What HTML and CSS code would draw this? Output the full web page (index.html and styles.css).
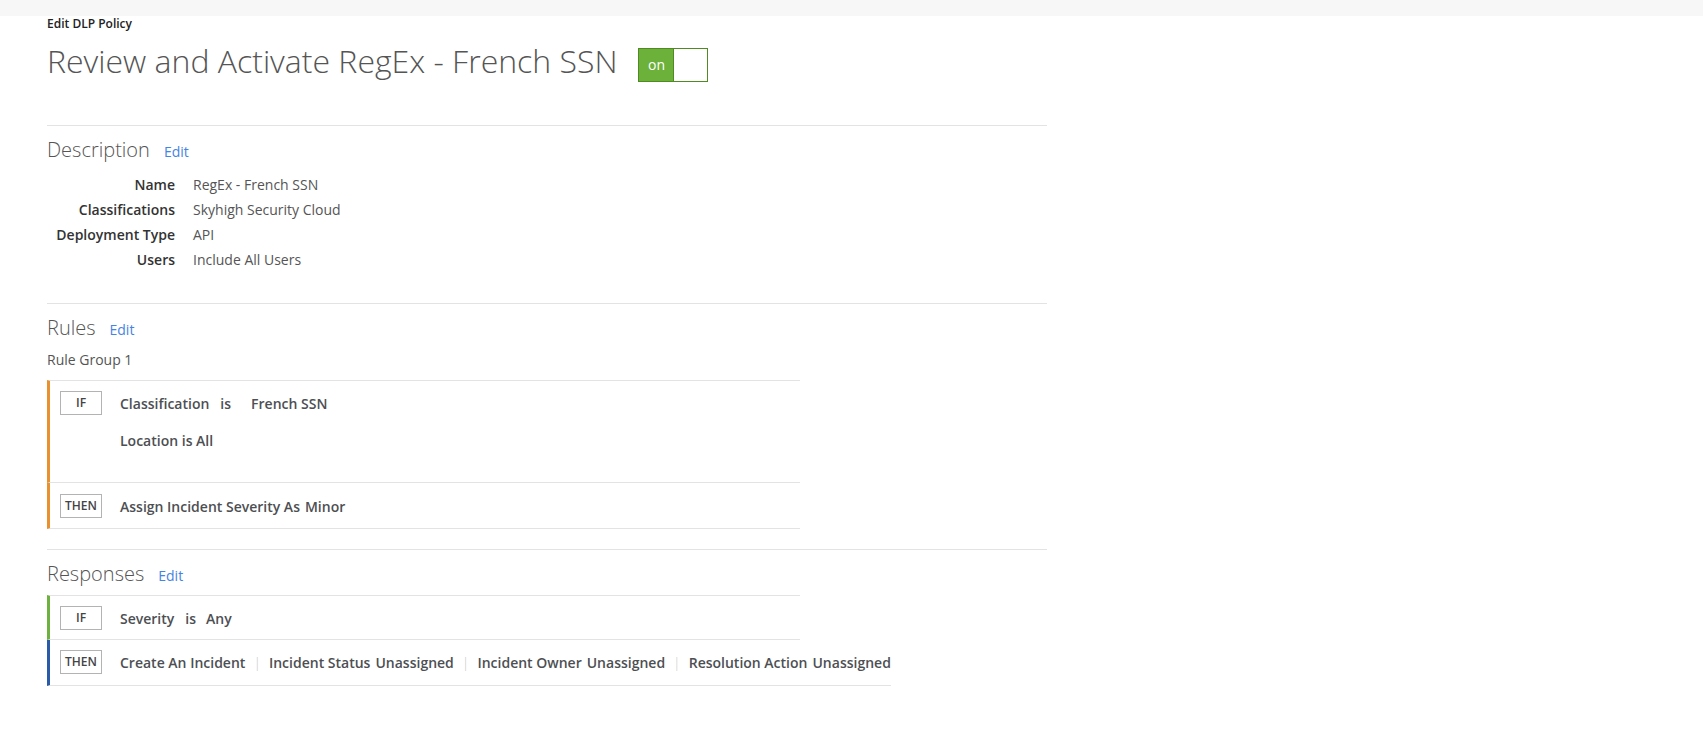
FILE: index.html
```html
<!DOCTYPE html>
<html>
<head>
<meta charset="utf-8">
<link rel="stylesheet" href="styles.css">
</head>
<body>
<div class="topbar"></div>
<main class="page">
  <div class="crumb">Edit DLP Policy</div>
  <div class="title-row">
    <h1 class="title">Review and Activate RegEx - French SSN</h1>
    <div class="toggle"><span class="toggle-on">on</span><span class="toggle-knob"></span></div>
  </div>

  <section class="section section-desc">
    <div class="sec-head"><h2 class="sec-title">Description</h2><a class="edit">Edit</a></div>
    <div class="props">
      <div class="prop-label">Name</div><div class="prop-value">RegEx - French SSN</div>
      <div class="prop-label">Classifications</div><div class="prop-value">Skyhigh Security Cloud</div>
      <div class="prop-label">Deployment Type</div><div class="prop-value">API</div>
      <div class="prop-label">Users</div><div class="prop-value">Include All Users</div>
    </div>
  </section>

  <section class="section section-rules">
    <div class="sec-head"><h2 class="sec-title">Rules</h2><a class="edit">Edit</a></div>
    <div class="group-name">Rule Group 1</div>
    <div class="rule-box">
      <div class="rule-row row-orange row-first row-if">
        <span class="badge">IF</span>
        <div class="conds">
          <div class="cond"><span class="gap11">Classification</span><span class="gap20">is</span><span>French SSN</span></div>
          <div class="cond">Location is All</div>
        </div>
      </div>
      <div class="rule-row row-orange row-then">
        <span class="badge">THEN</span>
        <div class="cond"><span class="gap5">Assign Incident Severity As</span><span>Minor</span></div>
      </div>
    </div>
  </section>

  <section class="section section-resp">
    <div class="sec-head"><h2 class="sec-title">Responses</h2><a class="edit">Edit</a></div>
    <div class="rule-box">
      <div class="rule-row row-green row-first resp-if">
        <span class="badge">IF</span>
        <div class="cond"><span class="gap11">Severity</span><span class="gap10">is</span><span>Any</span></div>
      </div>
      <div class="rule-row row-blue resp-then">
        <span class="badge">THEN</span>
        <div class="cond"><span>Create An Incident</span><span class="sep">|</span><span class="gap5">Incident Status</span><span>Unassigned</span><span class="sep">|</span><span class="gap5">Incident Owner</span><span>Unassigned</span><span class="sep">|</span><span class="gap5">Resolution Action</span><span>Unassigned</span></div>
      </div>
    </div>
  </section>
</main>
</body>
</html>
```

FILE: styles.css
```css
html, body {
  margin: 0;
  padding: 0;
  background: #ffffff;
  font-family: "Open Sans", "Liberation Sans", sans-serif;
  color: #555555;
}

.topbar {
  height: 16px;
  background: #f7f7f7;
}

.page {
  padding-left: 47px;
}

.crumb {
  font-size: 12px;
  line-height: 16px;
  font-weight: 600;
  color: #222222;
}

.title-row {
  display: flex;
  align-items: flex-start;
  margin-top: 9px;
}

.title {
  margin: 0;
  font-size: 32px;
  line-height: 40px;
  font-weight: 300;
  color: #555555;
}

.toggle {
  display: flex;
  width: 70px;
  height: 34px;
  box-sizing: border-box;
  border: 1px solid #4f8b22;
  margin-left: 21px;
  margin-top: 7px;
}

.toggle-on {
  width: 34px;
  background: #6cb13a;
  border-right: 1px solid #4f8b22;
  color: #ffffff;
  font-size: 14px;
  line-height: 32px;
  text-align: center;
}

.toggle-knob {
  flex: 1;
  background: #ffffff;
}

.section {
  width: 1000px;
  border-top: 1px solid #e3e3e3;
  padding-top: 9px;
}

.section-desc {
  margin-top: 43px;
  padding-bottom: 31px;
}

.section-rules {
  padding-top: 9px;
  padding-bottom: 20px;
}

.section-resp {
  padding-top: 9px;
}

.sec-head {
  display: flex;
  align-items: baseline;
}

.sec-title {
  margin: 0;
  font-size: 20px;
  line-height: 30px;
  font-weight: 300;
  color: #555555;
}

.edit {
  margin-left: 14px;
  font-size: 14px;
  color: #4584e4;
  cursor: pointer;
}

.props {
  display: grid;
  grid-template-columns: 128px auto;
  column-gap: 18px;
  margin-top: 7px;
  font-size: 14px;
  line-height: 25px;
}

.prop-label {
  text-align: right;
  font-weight: 600;
  color: #333333;
}

.prop-value {
  color: #555555;
}

.group-name {
  margin-top: 7px;
  font-size: 14px;
  line-height: 20px;
  color: #555555;
}

.section-rules .rule-box {
  margin-top: 10px;
}

.section-resp .rule-box {
  margin-top: 6px;
}

.rule-row {
  display: flex;
  align-items: flex-start;
  width: max-content;
  min-width: 753px;
  box-sizing: border-box;
  padding: 10px 0 9px 10px;
  border-left: 3px solid #e8912e;
  border-bottom: 1px solid #e3e3e3;
}

.row-first {
  border-top: 1px solid #e3e3e3;
}

.row-if {
  padding-bottom: 29px;
}

.row-then {
  padding-top: 11px;
}

.resp-if {
  padding-bottom: 8px;
}

.resp-then {
  padding-bottom: 10px;
}

.row-orange { border-left-color: #e8912e; }
.row-green { border-left-color: #6db23f; }
.row-blue { border-left-color: #2a5ba8; }

.badge {
  flex: none;
  width: 42px;
  height: 24px;
  box-sizing: border-box;
  border: 1px solid #b3b3b3;
  font-size: 12px;
  font-weight: 600;
  line-height: 22px;
  text-align: center;
  color: #444444;
  margin-right: 18px;
}

.conds {
  display: flex;
  flex-direction: column;
  gap: 12px;
}

.cond {
  display: flex;
  padding-top: 1px;
  font-size: 14px;
  line-height: 24px;
  font-weight: 600;
  color: #4d4f53;
  white-space: pre;
}

.gap5 { margin-right: 5px; }
.gap10 { margin-right: 10px; }
.gap11 { margin-right: 11px; }
.gap20 { margin-right: 20px; }

.sep {
  margin: 0 8px;
  font-weight: 300;
  color: #c8c8c8;
}
```
